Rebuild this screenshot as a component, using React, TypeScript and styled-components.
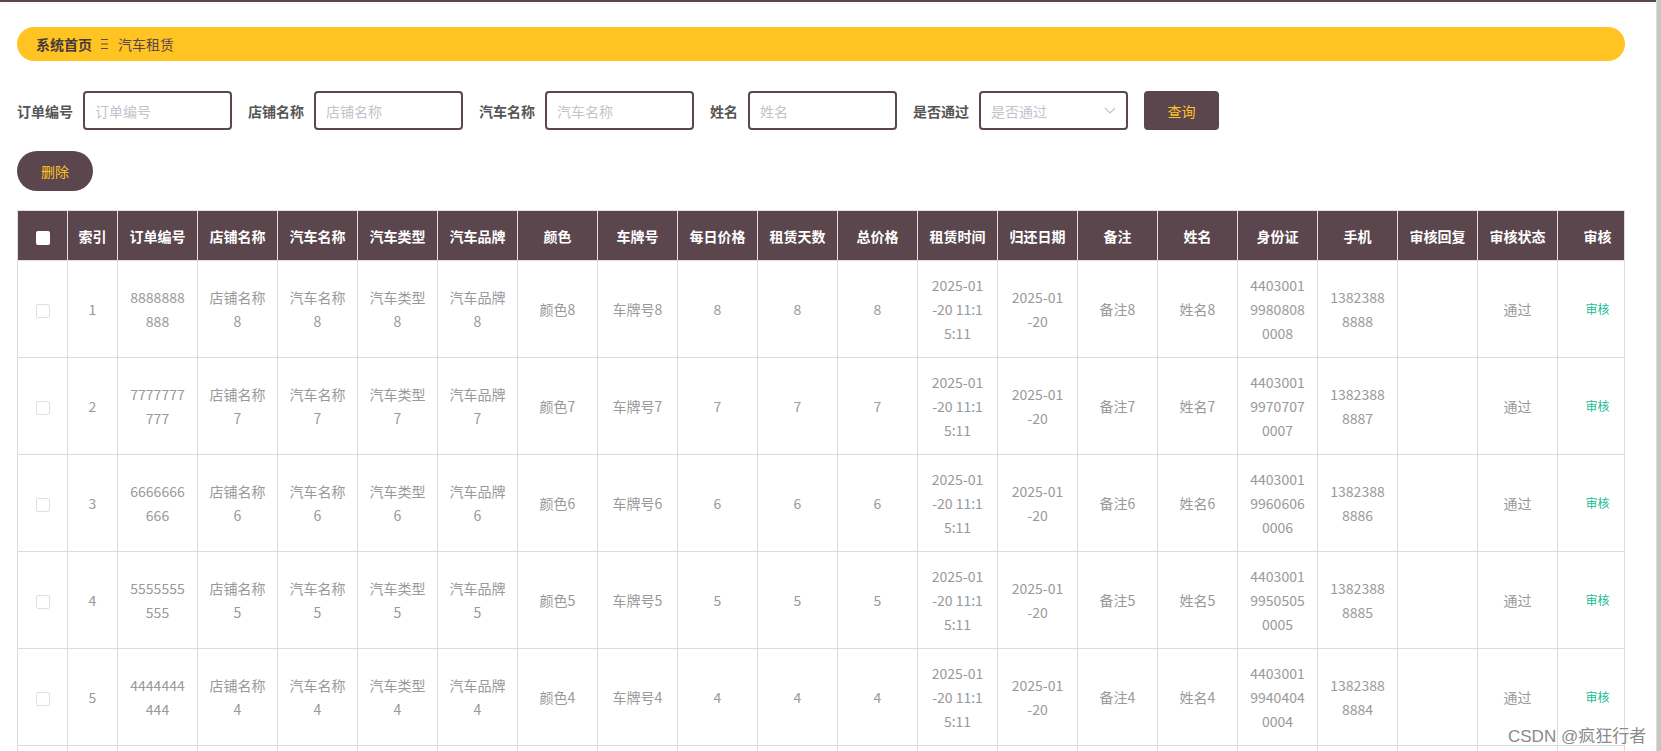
import React from "react";
import styled, { createGlobalStyle } from "styled-components";

const MAUVE = "#5b464e";
const YELLOW = "#ffc421";

const GlobalStyle = createGlobalStyle`
  html, body {
    margin: 0;
    padding: 0;
    height: 100%;
    overflow: hidden;
    background: #fff;
  }
  body {
    font-family: "Noto Sans CJK SC", "Noto Sans", sans-serif;
  }
  * {
    box-sizing: border-box;
  }
`;

const Page = styled.div`
  position: relative;
  height: 751px;
  overflow: hidden;
`;

const TopLine = styled.div`
  height: 2px;
  background: ${MAUVE};
  box-shadow: 0 1px 4px rgba(0, 40, 120, 0.08);
`;

const ScrollTrack = styled.div`
  position: fixed;
  top: 0;
  right: 0;
  width: 5px;
  height: 100%;
  background: #c6c6c6;
  border-left: 1px solid #dcdcdc;
`;

const Main = styled.main`
  padding: 25px 36px 0 17px;
`;

const Breadcrumb = styled.nav`
  display: flex;
  align-items: center;
  height: 34px;
  padding-left: 19px;
  border-radius: 17px;
  background: ${YELLOW};
  font-size: 14px;
  color: #4d3c42;
`;

const Crumb = styled.span<{ $strong?: boolean }>`
  font-weight: ${(p) => (p.$strong ? 700 : 400)};
  color: ${(p) => (p.$strong ? "#47383d" : "#5b464e")};
`;

const Sep = styled.svg`
  margin: 0 10px 0 9px;
`;

const SearchRow = styled.div`
  display: flex;
  align-items: center;
  margin-top: 30px;
`;

const Field = styled.label`
  display: flex;
  align-items: center;
  gap: 10px;
  margin-right: 16px;
`;

const Label = styled.span`
  font-size: 14px;
  font-weight: 700;
  color: #555;
  white-space: nowrap;
`;

const Input = styled.input`
  width: 149px;
  height: 39px;
  padding: 0 10px;
  border: 2px solid ${MAUVE};
  border-radius: 4px;
  font: inherit;
  font-size: 14px;
  color: #606266;
  outline: none;
  &::placeholder {
    color: #c0c4cc;
  }
`;

const Select = styled.div`
  display: flex;
  align-items: center;
  justify-content: space-between;
  width: 149px;
  height: 39px;
  padding: 0 10px;
  border: 2px solid ${MAUVE};
  border-radius: 4px;
  font-size: 14px;
  color: #c0c4cc;
`;

const QueryButton = styled.button`
  width: 75px;
  height: 39px;
  border: none;
  border-radius: 4px;
  background: ${MAUVE};
  color: ${YELLOW};
  font: inherit;
  font-size: 14px;
`;

const DeleteButton = styled.button`
  display: block;
  width: 76px;
  height: 40px;
  margin-top: 21px;
  border: none;
  border-radius: 20px;
  background: ${MAUVE};
  color: ${YELLOW};
  font: inherit;
  font-size: 14px;
`;

const TableWrap = styled.div`
  width: 1608px;
  margin-top: 19px;
  overflow: hidden;
  border-right: 1px solid #dcdcdc;
`;

const Table = styled.table`
  width: 1620px;
  table-layout: fixed;
  border-collapse: collapse;
  border: 1px solid #dcdcdc;
`;

const Th = styled.th`
  height: 50px;
  padding: 0 6px;
  background: ${MAUVE};
  color: #fff;
  font-size: 14px;
  font-weight: 700;
  text-align: center;
  border: 1px solid #e4dfe1;
  white-space: nowrap;
`;

const Td = styled.td<{ $tone?: "green" }>`
  height: 97px;
  padding: 12px 10px;
  border: 1px solid #dcdcdc;
  text-align: center;
  vertical-align: middle;
  font-size: ${(p) => (p.$tone === "green" ? "12px" : "14px")};
  line-height: 24px;
  color: ${(p) => (p.$tone === "green" ? "#15c08f" : "#999")};
  word-break: break-all;
`;

const Box = styled.span<{ $head?: boolean }>`
  display: inline-block;
  width: 14px;
  height: 14px;
  vertical-align: middle;
  border-radius: 2px;
  background: #fff;
  border: ${(p) => (p.$head ? "none" : "1px solid #dcdfe6")};
`;

const Watermark = styled.div`
  position: absolute;
  left: 1508px;
  top: 722px;
  font-family: "Liberation Sans", "Noto Sans CJK SC", sans-serif;
  font-size: 17px;
  color: #8a8a8a;
  text-shadow: 0 0 2px #fff;
  white-space: nowrap;
`;

const widths = [50, 50, ...Array(19).fill(80)];

const headers = [
  "索引",
  "订单编号",
  "店铺名称",
  "汽车名称",
  "汽车类型",
  "汽车品牌",
  "颜色",
  "车牌号",
  "每日价格",
  "租赁天数",
  "总价格",
  "租赁时间",
  "归还日期",
  "备注",
  "姓名",
  "身份证",
  "手机",
  "审核回复",
  "审核状态",
  "审核",
];

const Lines = ({ parts }: { parts: string[] }) => (
  <>
    {parts.map((p, i) => (
      <React.Fragment key={i}>
        {i > 0 && <br />}
        {p}
      </React.Fragment>
    ))}
  </>
);

const rows = [8, 7, 6, 5, 4, 3, 2, 1];

const App = (): JSX.Element => (
  <Page>
    <GlobalStyle />
    <TopLine />
    <ScrollTrack />
    <Main>
      <Breadcrumb>
        <Crumb $strong>系统首页</Crumb>
        <Sep width="7" height="12" viewBox="0 0 7 12">
          <path d="M0 1.5h7M0 6h7M0 10.5h7" stroke="#5b464e" strokeWidth="1" />
        </Sep>
        <Crumb>汽车租赁</Crumb>
      </Breadcrumb>

      <SearchRow>
        <Field>
          <Label>订单编号</Label>
          <Input placeholder="订单编号" />
        </Field>
        <Field>
          <Label>店铺名称</Label>
          <Input placeholder="店铺名称" />
        </Field>
        <Field>
          <Label>汽车名称</Label>
          <Input placeholder="汽车名称" />
        </Field>
        <Field>
          <Label>姓名</Label>
          <Input placeholder="姓名" />
        </Field>
        <Field>
          <Label>是否通过</Label>
          <Select>
            <span>是否通过</span>
            <svg width="12" height="7" viewBox="0 0 12 7">
              <path d="M1 1l5 5 5-5" fill="none" stroke="#c0c4cc" strokeWidth="1.2" />
            </svg>
          </Select>
        </Field>
        <QueryButton>查询</QueryButton>
      </SearchRow>

      <DeleteButton>删除</DeleteButton>

      <TableWrap>
        <Table>
          <colgroup>
            {widths.map((w, i) => (
              <col key={i} style={{ width: w }} />
            ))}
          </colgroup>
          <thead>
            <tr>
              <Th>
                <Box $head />
              </Th>
              {headers.map((h) => (
                <Th key={h}>{h}</Th>
              ))}
            </tr>
          </thead>
          <tbody>
            {rows.map((n, i) => (
              <tr key={n}>
                <Td>
                  <Box />
                </Td>
                <Td>{i + 1}</Td>
                <Td>{String(n).repeat(10)}</Td>
                <Td>店铺名称{n}</Td>
                <Td>汽车名称{n}</Td>
                <Td>汽车类型{n}</Td>
                <Td>汽车品牌{n}</Td>
                <Td>颜色{n}</Td>
                <Td>车牌号{n}</Td>
                <Td>{n}</Td>
                <Td>{n}</Td>
                <Td>{n}</Td>
                <Td>
                  <Lines parts={["2025-01", "-20 11:1", "5:11"]} />
                </Td>
                <Td>
                  <Lines parts={["2025-01", "-20"]} />
                </Td>
                <Td>备注{n}</Td>
                <Td>姓名{n}</Td>
                <Td>{`440300199${n}0${n}0${n}000${n}`}</Td>
                <Td>{`1382388888${n}`}</Td>
                <Td />
                <Td>通过</Td>
                <Td $tone="green">审核</Td>
              </tr>
            ))}
          </tbody>
        </Table>
      </TableWrap>
    </Main>
    <Watermark>CSDN @疯狂行者</Watermark>
  </Page>
);

export default App;
